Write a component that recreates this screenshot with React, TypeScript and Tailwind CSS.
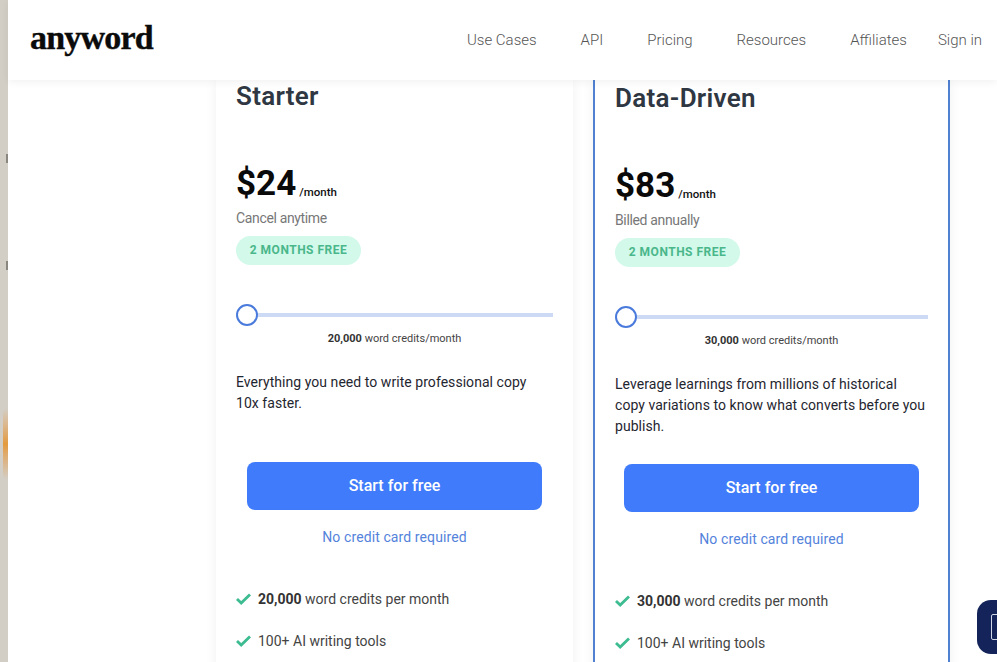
const navLinks = ["Use Cases", "API", "Pricing", "Resources", "Affiliates"];

interface Plan {
  name: string;
  price: string;
  billing: string;
  credits: string;
  description: string[];
  featured?: boolean;
}

const plans: Plan[] = [
  {
    name: "Starter",
    price: "$24",
    billing: "Cancel anytime",
    credits: "20,000",
    description: ["Everything you need to write professional copy", "10x faster."],
  },
  {
    name: "Data-Driven",
    price: "$83",
    billing: "Billed annually",
    credits: "30,000",
    description: [
      "Leverage learnings from millions of historical",
      "copy variations to know what converts before you",
      "publish.",
    ],
    featured: true,
  },
];

function Check() {
  return (
    <svg width="15" height="12" viewBox="0 0 15 12" fill="none" className="shrink-0">
      <path d="M1 6 5.2 10 14 1.4" stroke="#3dbb91" strokeWidth="2.8" />
    </svg>
  );
}

function PlanCard({ plan }: { plan: Plan }) {
  const border = plan.featured ? "border-x-2 border-b-2 border-[#4f80d2]" : "";
  return (
    <div className={`w-[357px] h-[640px] shrink-0 bg-white shadow-[0_0_12px_rgba(0,0,0,0.06)] ${border}`}>
      <div className="px-[20px]">
        <h2 className={`text-[26px] leading-[32px] font-semibold tracking-[0.3px] text-[#2f3742] ${plan.featured ? "pt-[2px]" : ""}`}>
          {plan.name}
        </h2>
        <div className="flex items-end mt-[50px] h-[46px]">
          <span className="text-[35px] leading-[44px] font-bold text-[#0a0a0a] mb-[2px]">{plan.price}</span>
          <span className="text-[11.5px] leading-[16px] font-medium text-[#111] ml-[3px] mb-[8px]">/month</span>
        </div>
        <p className="text-[14px] leading-[20px] text-[#777] tracking-[-0.35px]">{plan.billing}</p>
        <span className="inline-flex items-center justify-center w-[125px] h-[29px] mt-[8px] pb-[2px] rounded-full bg-[#d2f9ea] text-[12px] font-bold tracking-[0.5px] text-[#4ab78a]">
          2 MONTHS FREE
        </span>
        <div className="flex items-center mt-[39px] h-[22px]">
          <span className="w-[22px] h-[22px] rounded-full border-[2.5px] border-[#4a7bdc] bg-white shrink-0" />
          <span className="flex-1 h-[4px] bg-[#cddaf6]" />
        </div>
        <p className="text-center text-[11px] leading-[16px] text-[#444] mt-[5px]">
          <span className="font-bold text-[#333]">{plan.credits}</span> word credits/month
        </p>
        <div className="mt-[25px] h-[90px] text-[14px] leading-[21px] tracking-[0.05px] text-[#1f2630]">
          {plan.description.map((line) => (
            <p key={line}>{line}</p>
          ))}
        </div>
        <button className="block w-[295px] h-[48px] mx-auto rounded-[8px] bg-[#3f7bfa] text-white text-[16px] font-medium">
          Start for free
        </button>
        <p className="text-center text-[14px] leading-[20px] tracking-[0.1px] text-[#5483dc] mt-[17px]">No credit card required</p>
        <ul className="mt-[42px] flex flex-col gap-[22px] text-[14px] leading-[20px] text-[#444]">
          <li className="flex items-center gap-[7px]">
            <Check />
            <span>
              <span className="font-bold text-[#333]">{plan.credits}</span> word credits per month
            </span>
          </li>
          <li className="flex items-center gap-[7px]">
            <Check />
            <span>100+ AI writing tools</span>
          </li>
        </ul>
      </div>
    </div>
  );
}

export default function App() {
  return (
    <div className="relative flex h-[662px] w-[997px] overflow-hidden bg-white font-['Roboto',sans-serif]">
      <div className="w-[8px] shrink-0 bg-[#d2cec6] flex flex-col items-end">
        <div className="w-[2px] h-[9px] mt-[154px] bg-[#8a8780]" />
        <div className="w-[2px] h-[9px] mt-[98px] bg-[#8a8780]" />
        <div className="w-[5px] h-[72px] mt-[138px] rounded-l-full bg-gradient-to-b from-[#d2cec6] via-[#e39a3a] to-[#d2cec6]" />
      </div>
      <div className="flex-1 flex flex-col min-w-0">
        <header className="relative z-10 h-[80px] shrink-0 flex items-center justify-between bg-white pl-[22px] pr-[15px] shadow-[0_2px_8px_rgba(0,0,0,0.06)]">
          <span className="font-['Liberation_Serif',serif] font-bold text-[34px] leading-none tracking-[-0.8px] text-[#0b0b0b] -mt-[5px] [-webkit-text-stroke:0.4px_#0b0b0b]">
            anyword
          </span>
          <nav className="flex items-center text-[15px] font-light text-[#555]">
            <div className="flex gap-[44px]">
              {navLinks.map((link) => (
                <a key={link}>{link}</a>
              ))}
            </div>
            <a className="ml-[31px]">Sign in</a>
          </nav>
        </header>
        <main className="flex gap-[20px] pl-[208px]">
          {plans.map((plan) => (
            <PlanCard key={plan.name} plan={plan} />
          ))}
        </main>
      </div>
      <div className="absolute left-[977px] top-[600px] w-[40px] h-[54px] rounded-[14px] bg-[#14245a] flex items-center pl-[14px]">
        <div className="w-[8px] h-[26px] rounded-[2px] border border-[#cfd6e6]" />
      </div>
    </div>
  );
}
